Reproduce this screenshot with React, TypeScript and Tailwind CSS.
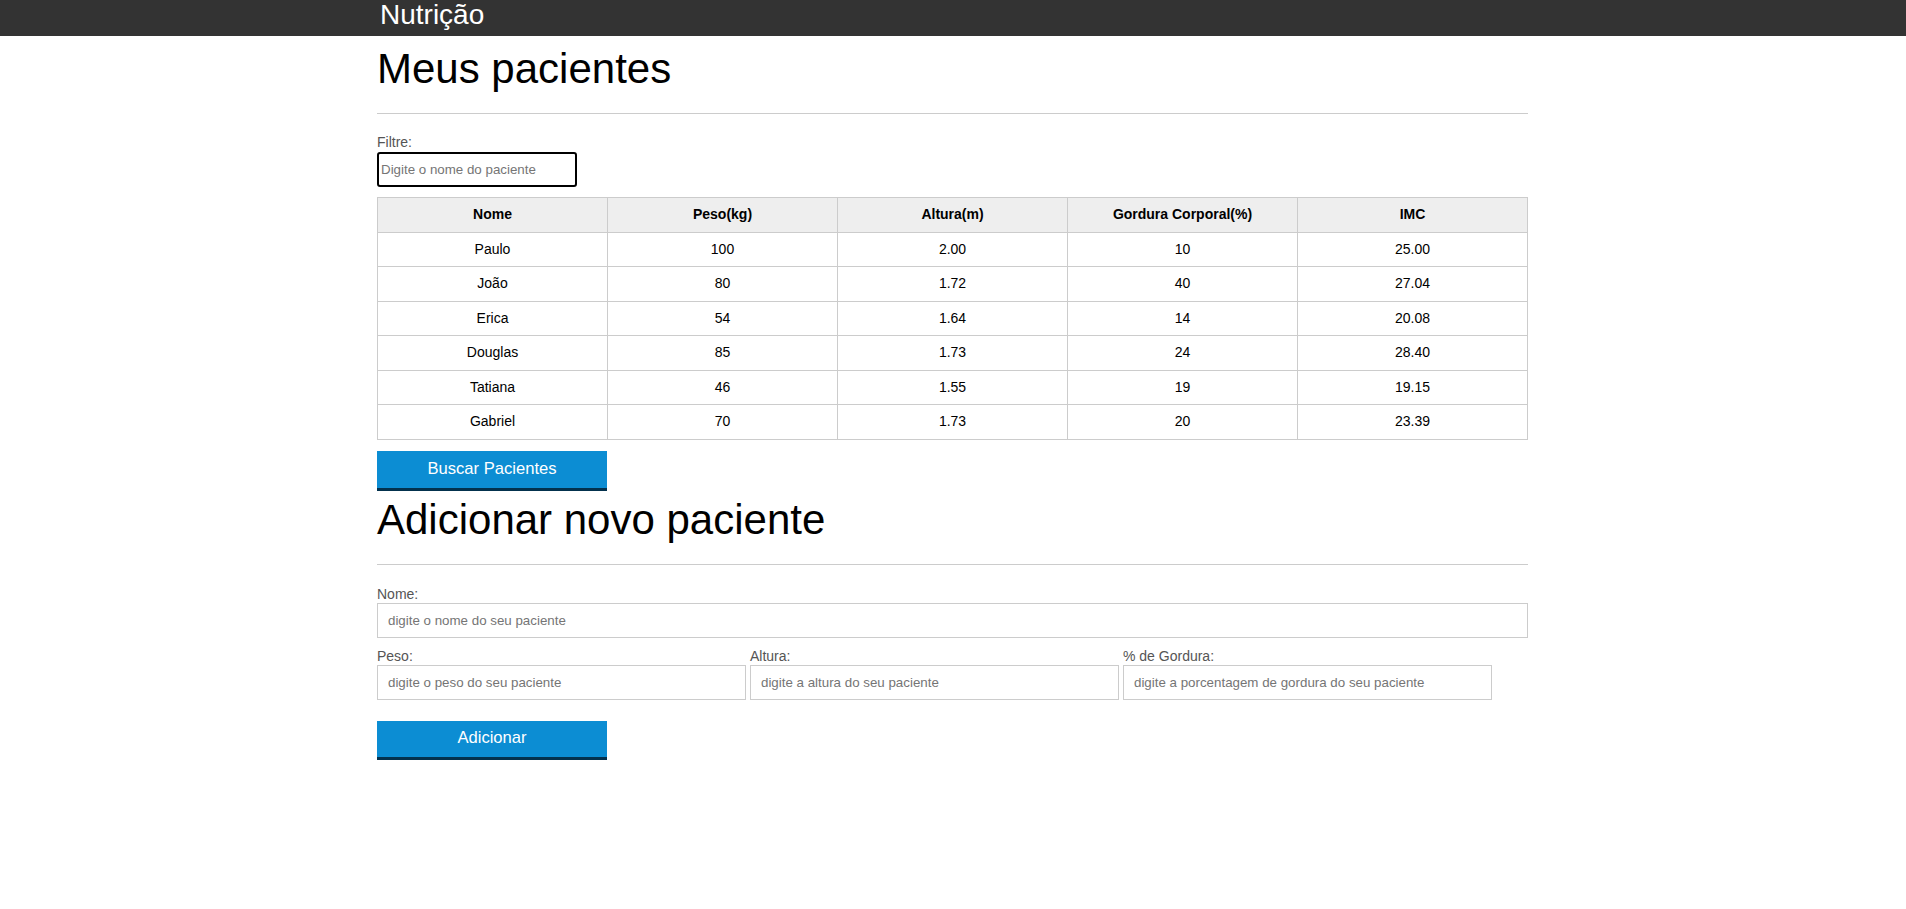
const pacientes = [
  { nome: "Paulo", peso: "100", altura: "2.00", gordura: "10", imc: "25.00" },
  { nome: "João", peso: "80", altura: "1.72", gordura: "40", imc: "27.04" },
  { nome: "Erica", peso: "54", altura: "1.64", gordura: "14", imc: "20.08" },
  { nome: "Douglas", peso: "85", altura: "1.73", gordura: "24", imc: "28.40" },
  { nome: "Tatiana", peso: "46", altura: "1.55", gordura: "19", imc: "19.15" },
  { nome: "Gabriel", peso: "70", altura: "1.73", gordura: "20", imc: "23.39" },
]

const colunas = ["Nome", "Peso(kg)", "Altura(m)", "Gordura Corporal(%)", "IMC"]

const Botao = ({ children, className = "" }: { children: string; className?: string }) => (
  <button
    className={`block w-[230px] bg-[#0c8dd3] border-b-[3px] border-[#03314d] text-white text-[16.6px] leading-none ${className}`}
  >
    {children}
  </button>
)

const Campo = ({
  label,
  placeholder,
  className = "",
}: {
  label: string
  placeholder: string
  className?: string
}) => (
  <div className={className}>
    <label className="block text-[14px] leading-[16px] text-[#555] mb-[1px]">{label}</label>
    <input
      placeholder={placeholder}
      className="block w-full h-[35px] border border-[#ccc] px-[10px] text-[13.33px] outline-none placeholder:text-[#757575]"
    />
  </div>
)

export default function App() {
  return (
    <div className="min-h-screen bg-white text-black font-['Liberation_Sans',Arial,sans-serif]">
      <header className="h-[36px] bg-[#333]">
        <div className="w-[1152px] mx-auto pl-[3px]">
          <h1 className="text-white text-[28px] leading-[30px]">Nutrição</h1>
        </div>
      </header>

      <main className="w-[1152px] mx-auto pr-[1px]">
        <section>
          <h2 className="mt-[10px] text-[42px] leading-[46px]">Meus pacientes</h2>
          <hr className="mt-[21px] border-t border-[#ccc]" />

          <label className="block mt-[20px] text-[14px] leading-[16px] text-[#555]">Filtre:</label>
          <input
            placeholder="Digite o nome do paciente"
            className="block mt-[2px] w-[200px] h-[35px] border-2 border-black rounded-[3px] px-[2px] text-[13.33px] outline-none placeholder:text-[#757575]"
          />

          <table className="mt-[10px] w-full border-collapse table-fixed text-[14px]">
            <thead>
              <tr className="bg-[#eee]">
                {colunas.map((c) => (
                  <th key={c} className="h-[34.5px] border border-[#ccc] font-bold text-center">
                    {c}
                  </th>
                ))}
              </tr>
            </thead>
            <tbody>
              {pacientes.map((p) => (
                <tr key={p.nome}>
                  <td className="h-[34.5px] border border-[#ccc] text-center">{p.nome}</td>
                  <td className="h-[34.5px] border border-[#ccc] text-center">{p.peso}</td>
                  <td className="h-[34.5px] border border-[#ccc] text-center">{p.altura}</td>
                  <td className="h-[34.5px] border border-[#ccc] text-center">{p.gordura}</td>
                  <td className="h-[34.5px] border border-[#ccc] text-center">{p.imc}</td>
                </tr>
              ))}
            </tbody>
          </table>

          <Botao className="mt-[11px] h-[40px]">Buscar Pacientes</Botao>
        </section>

        <section>
          <h2 className="mt-[6px] text-[42px] leading-[46px]">Adicionar novo paciente</h2>
          <hr className="mt-[21px] border-t border-[#ccc]" />

          <form className="mt-[21px]">
            <Campo label="Nome:" placeholder="digite o nome do seu paciente" />
            <div className="flex gap-[4px] mt-[10px]">
              <Campo className="w-[369px]" label="Peso:" placeholder="digite o peso do seu paciente" />
              <Campo className="w-[369px]" label="Altura:" placeholder="digite a altura do seu paciente" />
              <Campo
                className="w-[369px]"
                label="% de Gordura:"
                placeholder="digite a porcentagem de gordura do seu paciente"
              />
            </div>
            <Botao className="mt-[21px] h-[39px]">Adicionar</Botao>
          </form>
        </section>
      </main>
    </div>
  )
}
